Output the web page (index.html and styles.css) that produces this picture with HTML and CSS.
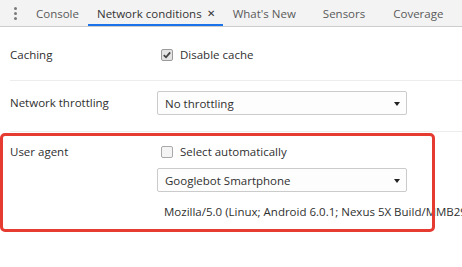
FILE: index.html
```html
<!DOCTYPE html>
<html>
<head>
<meta charset="utf-8">
<link rel="stylesheet" href="styles.css">
</head>
<body>
<div class="tabbar">
  <div class="menu"><span></span><span></span><span></span></div>
  <div class="tab t-console">Console</div>
  <div class="tab active">Network conditions <span class="close">✕</span></div>
  <div class="tab t-new">What's New</div>
  <div class="tab t-sensors">Sensors</div>
  <div class="tab t-cov">Coverage</div>
</div>
<div class="content">
  <div class="row r1">
    <div class="label">Caching</div>
    <div class="ctrl">
      <label class="check"><span class="box checked"><svg width="10" height="10" viewBox="0 0 10 10"><path d="M1.8 5.2 L4 7.3 L8.2 2.4" fill="none" stroke="#444" stroke-width="1.8"/></svg></span>Disable cache</label>
    </div>
  </div>
  <div class="row r2">
    <div class="label">Network throttling</div>
    <div class="ctrl">
      <div class="select">No throttling<span class="arrow"></span></div>
    </div>
  </div>
  <div class="row r3">
    <div class="label">User agent</div>
    <div class="ctrl">
      <label class="check"><span class="box"></span>Select automatically</label>
      <div class="select sel2">Googlebot Smartphone<span class="arrow"></span></div>
      <div class="ua">Mozilla/5.0 (Linux; Android 6.0.1; Nexus 5X Build/MMB29P) AppleWebKit/537.36</div>
    </div>
  </div>
  <div class="highlight"></div>
</div>
</body>
</html>
```
FILE: styles.css
```css
html, body {
  margin: 0;
  padding: 0;
  background: #fff;
  overflow: hidden;
}
body {
  font-family: "Open Sans", "Noto Sans", sans-serif;
  font-size: 11.5px;
  color: #303030;
  width: 462px;
  height: 267px;
}
.tabbar {
  display: flex;
  align-items: stretch;
  height: 26px;
  background: #f3f3f3;
  border-bottom: 1px solid #cdcdcd;
  white-space: nowrap;
}
.menu {
  width: 27px;
  display: flex;
  flex-direction: column;
  align-items: center;
  justify-content: center;
  gap: 2px;
  padding-left: 3px;
  box-sizing: border-box;
}
.menu span {
  width: 3px;
  height: 3px;
  border-radius: 50%;
  background: #7a7a7a;
}
.tab {
  display: flex;
  align-items: center;
  padding: 0 9px;
  color: #5a5a5a;
  box-sizing: border-box;
}
.tab.active {
  color: #333;
  border-bottom: 2px solid #1a73e8;
  padding-top: 2px;
  padding-right: 8px;
}
.t-new { padding: 0 13px 0 10px; }
.t-sensors { padding: 0 14px; }
.t-cov { padding: 0 14px; }
.close {
  font-size: 10px;
  margin-left: 5px;
  color: #333;
}
.content {
  position: relative;
}
.row {
  display: flex;
  margin-left: 10px;
  border-bottom: 1px solid #ececec;
}
.label {
  width: 147px;
  flex: none;
  line-height: 16px;
}
.ctrl {
  display: flex;
  flex-direction: column;
  align-items: flex-start;
}
.r1 { padding: 20px 0 17px; }
.r2 { padding: 10px 0 16px; align-items: center; }
.r3 { padding: 12px 0 30px; border-bottom: none; }
.check {
  display: flex;
  align-items: center;
  line-height: 16px;
  padding-left: 4px;
}
.box {
  width: 12px;
  height: 12px;
  box-sizing: border-box;
  border: 1px solid #a9a9a9;
  border-radius: 2px;
  background: #f4f4f4;
  margin-right: 7px;
  display: flex;
  align-items: center;
  justify-content: center;
}
.box.checked {
  background: #e4e4e4;
  border-color: #9a9a9a;
}
.select {
  position: relative;
  width: 250px;
  height: 24px;
  box-sizing: border-box;
  border: 1px solid #cbcbcb;
  border-radius: 2px;
  background: #fdfdfd;
  padding-left: 7px;
  display: flex;
  align-items: center;
}
.sel2 { margin-top: 8px; }
.arrow {
  position: absolute;
  right: 6px;
  top: 10px;
  width: 0;
  height: 0;
  border-left: 3.5px solid transparent;
  border-right: 3.5px solid transparent;
  border-top: 4px solid #222;
}
.ua {
  margin-top: 12px;
  padding-left: 7px;
  line-height: 16px;
  white-space: nowrap;
}
.highlight {
  position: absolute;
  left: 0;
  top: 106px;
  width: 435px;
  height: 99px;
  box-sizing: border-box;
  border: 3px solid #e53b31;
  border-radius: 5px;
  pointer-events: none;
}
```
